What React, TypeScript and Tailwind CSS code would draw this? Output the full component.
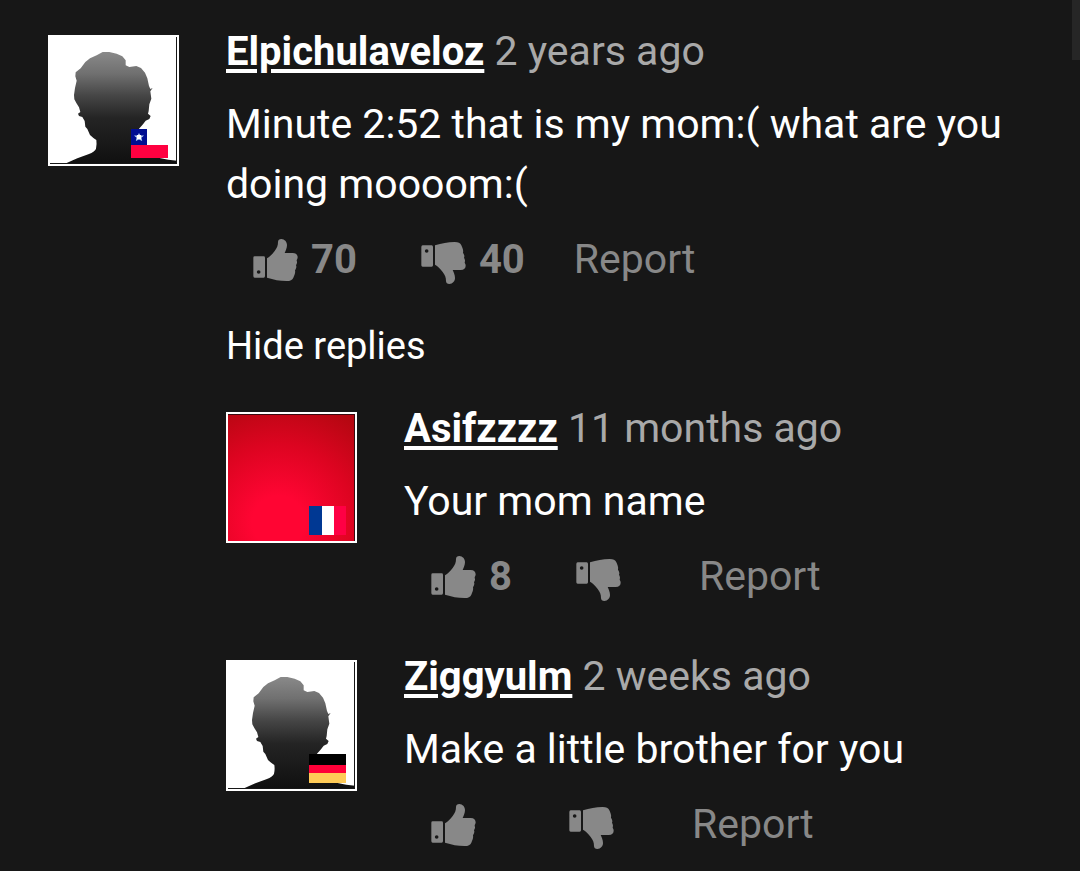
import React from "react";

type Country = "cl" | "fr" | "de";

type CommentData = {
  author: string;
  time: string;
  text: string;
  likes?: number;
  dislikes?: number;
  country: Country;
  avatar: "silhouette" | "red";
};

const comment: CommentData = {
  author: "Elpichulaveloz",
  time: "2 years ago",
  text: "Minute 2:52 that is my mom:( what are you doing moooom:(",
  likes: 70,
  dislikes: 40,
  country: "cl",
  avatar: "silhouette",
};

const replies: CommentData[] = [
  {
    author: "Asifzzzz",
    time: "11 months ago",
    text: "Your mom name",
    likes: 8,
    country: "fr",
    avatar: "red",
  },
  {
    author: "Ziggyulm",
    time: "2 weeks ago",
    text: "Make a little brother for you",
    country: "de",
    avatar: "silhouette",
  },
];

function ThumbIcon({ down = false }: { down?: boolean }) {
  return (
    <svg className="w-[45px] h-12 shrink-0" viewBox="0 0 135 144" aria-hidden="true">
      <g transform={down ? "matrix(1 0 0 -1 0 144)" : "translate(0 9)"} fill="#888888">
        <path
          fillRule="evenodd"
          d="M5 52H32Q36 52 36 56V111Q36 116 32 116H5Q1 116 1 111V56Q1 52 5 52ZM17 93.500A5.500 5.500 0 1 0 17 104.500A5.500 5.500 0 1 0 17 93.500Z"
        />
        <path d="M42 58C50 54 58 45 65 36C72 27 75 20 75 9C75 3 79 0 85 0C95 1 102 8 102 18C102 27 98 35 95 42H119C129 42 134 48 134 55C134 60 131 62 131 65C134 71 130 76 129 79C132 84 128 91 126 94C128 101 124 109 121 116C118 123 112 126 101 126C80 126 62 122 42 116Z" />
      </g>
    </svg>
  );
}

function Silhouette({ id }: { id: string }) {
  return (
    <svg className="block w-full h-full" viewBox="27 27 381 381" aria-hidden="true">
      <defs>
        <linearGradient id={id} x1="0" y1="70" x2="0" y2="405" gradientUnits="userSpaceOnUse">
          <stop offset="0" stopColor="#8a8a8a" />
          <stop offset="0.2" stopColor="#707070" />
          <stop offset="0.4" stopColor="#454545" />
          <stop offset="0.6" stopColor="#242424" />
          <stop offset="1" stopColor="#101010" />
        </linearGradient>
      </defs>
      <rect x="27" y="27" width="381" height="381" fill="#ffffff" />
      <path
        transform="translate(-3 0)"
        fill={`url(#${id})`}
        d="M80 405L112 391L145 379Q166 370 168 362Q171 350 169 336Q158 329 150 321L142 303L136 296L134 279L127 267L117 264L114 257L121 252L117 238L109 225L103 214L102 201L105 180L110 158L106 145L107 133L122 121L136 102L150 91L170 82L188 72H208L230 77L247 85L257 97V112L268 117L289 114L303 120L315 134L322 151L327 174L331 183L338 180L331 190L334 212L328 229L326 249L324 257L332 264L328 273L317 278L309 289L297 302L288 318L282 340V360L300 374L340 386L385 395L411 398V408H80Z"
      />
      <path d="M27 406.500H406.500V27" fill="none" stroke="#171717" strokeWidth="3" />
    </svg>
  );
}

function Flag({ country }: { country: Country }) {
  return (
    <svg
      className="absolute right-[9px] bottom-[6px] w-[37px] h-[29px]"
      viewBox="0 0 37 29"
      shapeRendering="crispEdges"
      aria-hidden="true"
    >
      {country === "cl" && (
        <>
          <path fill="#ffffff" d="M16 0h21v16H16z" />
          <path fill="#000e91" d="M0 0h16v16H0z" />
          <path fill="#ff0040" d="M0 16h37v13H0z" />
          <path
            fill="#b9d4f5"
            shapeRendering="auto"
            d="M8 4l1.300 2.500H13l-2.600 2.200.8 3.300L8 10.500 4.800 12l.8-3.300L3 6.500h3.700z"
          />
          <path fill="#ffffff" d="M6 6h4v4H6z" />
        </>
      )}
      {country === "fr" && (
        <>
          <path fill="#003893" d="M0 0h13v29H0z" />
          <path fill="#ffffff" d="M13 0h12v29H13z" />
          <path fill="#ff0044" d="M25 0h12v29H25z" />
        </>
      )}
      {country === "de" && (
        <>
          <path fill="#000000" d="M0 0h37v11H0z" />
          <path fill="#ff0038" d="M0 11h37v8H0z" />
          <path fill="#ffcb57" d="M0 19h37v10H0z" />
        </>
      )}
    </svg>
  );
}

function Avatar({ data }: { data: CommentData }) {
  return (
    <div className="relative mt-[7px] w-[131px] h-[131px] shrink-0 border-2 border-white">
      {data.avatar === "silhouette" ? (
        <Silhouette id={`shade-${data.country}`} />
      ) : (
        <div className="w-full h-full border-t border-r border-[#3a0a10] bg-[radial-gradient(circle_at_40%_85%,#ff0533_0%,#ff0533_20%,#dc0420_60%,#b50711_95%)]"></div>
      )}
      <Flag country={data.country} />
    </div>
  );
}

function Vote({ label, count, down }: { label: string; count?: number; down?: boolean }) {
  return (
    <button
      type="button"
      aria-label={label}
      className="flex items-center gap-[13px] text-[40px] font-bold cursor-pointer"
    >
      <ThumbIcon down={down} />
      <span className="min-w-4 text-left">{count}</span>
    </button>
  );
}

function Comment({ data, children }: { data: CommentData; children?: React.ReactNode }) {
  return (
    <article className="flex items-start gap-[47px]">
      <Avatar data={data} />
      <div className="flex-1 min-w-0">
        <header className="leading-[46px] text-[#a9a9a9]">
          <a
            href="#"
            className="text-[40px] font-bold text-white underline decoration-4 underline-offset-4"
          >
            {data.author}
          </a>{" "}
          <span>{data.time}</span>
        </header>
        <p className="mt-[19px] leading-[60px] text-white">{data.text}</p>
        <div className="mt-4 pl-[27px] h-[60px] flex items-center text-[#888888]">
          <Vote label="Like" count={data.likes} />
          <div className="ml-16">
            <Vote label="Dislike" count={data.dislikes} down />
          </div>
          <button type="button" className="ml-[49px] cursor-pointer">
            Report
          </button>
        </div>
        {children}
      </div>
    </article>
  );
}

export default function App() {
  return (
    <div className="relative min-h-screen bg-[#171717] pt-7 pl-12 pr-12 font-['Roboto',sans-serif] text-[41px]">
      {/* Scroll thumb */}
      <div className="absolute top-0 right-0 w-2 h-[60px] bg-[#262626]"></div>

      <Comment data={comment}>
        <button type="button" className="block mt-[26px] leading-[60px] text-[38px] text-white cursor-pointer">
          Hide replies
        </button>
        <div className="mt-[29px] flex flex-col gap-[46px]">
          {replies.map((reply) => (
            <Comment key={reply.author} data={reply} />
          ))}
        </div>
      </Comment>
    </div>
  );
}
